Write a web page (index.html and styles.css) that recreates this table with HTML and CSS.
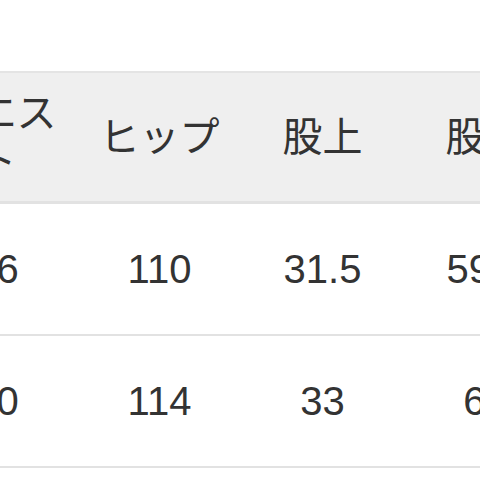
FILE: index.html
```html
<!DOCTYPE html>
<html lang="ja">
<head>
<meta charset="utf-8">
<link rel="stylesheet" href="styles.css">
</head>
<body>
<div class="table">
  <div class="row head">
    <div class="cell">ウエスト</div>
    <div class="cell">ヒップ</div>
    <div class="cell">股上</div>
    <div class="cell">股下</div>
  </div>
  <div class="row">
    <div class="cell">76</div>
    <div class="cell">110</div>
    <div class="cell">31.5</div>
    <div class="cell">59.5</div>
  </div>
  <div class="row">
    <div class="cell">80</div>
    <div class="cell">114</div>
    <div class="cell">33</div>
    <div class="cell">62</div>
  </div>
</div>
</body>
</html>
```
FILE: styles.css
```css
html, body {
  margin: 0;
  padding: 0;
  overflow: hidden;
  background: #ffffff;
  width: 480px;
  height: 480px;
}
.table {
  margin-top: 71px;
  margin-left: -85px;
  width: 652px;
  border-top: 2px solid #e4e4e4;
  font-family: "Liberation Sans", "Noto Sans CJK JP", sans-serif;
  color: #333333;
  font-size: 40px;
}
.row {
  display: grid;
  grid-template-columns: repeat(4, 163px);
  height: 130px;
  border-bottom: 2px solid #e2e2e2;
}
.row.head {
  background: #efefef;
  height: 128px;
  border-bottom: 3px solid #e2e2e2;
}
.cell {
  display: flex;
  align-items: center;
  justify-content: center;
  text-align: center;
  padding: 0 8px;
  line-height: 48px;
}
```
